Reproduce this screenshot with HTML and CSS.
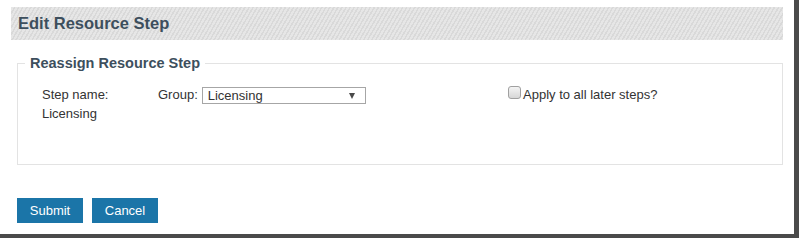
FILE: index.html
```html
<!DOCTYPE html>
<html>
<head>
<meta charset="utf-8">
<link rel="stylesheet" href="styles.css">
</head>
<body>
<div class="page">
  <div class="title-bar"><h1 class="title">Edit Resource Step</h1></div>
  <fieldset class="panel">
    <legend class="panel-legend">Reassign Resource Step</legend>
    <div class="form-row">
      <div class="step-name">Step name:<br>Licensing</div>
      <div class="group">
        <span class="group-label">Group:</span>
        <span class="select"><span class="select-text">Licensing</span><span class="select-arrow"></span></span>
      </div>
      <label class="apply"><span class="checkbox"></span>Apply to all later steps?</label>
    </div>
  </fieldset>
  <div class="actions">
    <button class="btn">Submit</button>
    <button class="btn">Cancel</button>
  </div>
</div>
</body>
</html>
```
FILE: styles.css
```css
html {
  background: #4a4a4a;
  margin: 0;
  padding: 0;
}
body {
  margin: 0;
  padding: 0;
  font-family: "Liberation Sans", Arial, sans-serif;
  font-size: 13px;
  color: #333;
}
.page {
  width: 794px;
  height: 234px;
  background: #fff;
  padding-top: 7px;
  box-sizing: border-box;
}
.title-bar {
  margin: 0 11px 0 11px;
  height: 33px;
  background: repeating-linear-gradient(-60deg, #e6e6e6 0px, #e6e6e6 2px, #d9d9d9 2px, #d9d9d9 3.5px);
  display: flex;
  align-items: center;
  padding-left: 7px;
}
.title {
  margin: 0;
  font-size: 16.5px;
  font-weight: bold;
  color: #3d4f5d;
}
.panel {
  margin: 15px 11px 0 17px;
  padding: 13px 0 0 0;
  border: 1px solid #e3e3e3;
  height: 110px;
  box-sizing: border-box;
  min-width: 0;
}
.panel-legend {
  font-size: 14.5px;
  font-weight: bold;
  color: #3d4f5d;
  padding: 0 5px;
  margin-left: 7px;
  line-height: 17px;
}
.form-row {
  display: grid;
  grid-template-columns: 116px 350px auto;
  line-height: 19px;
  margin-left: 24px;
}
.group {
  display: flex;
  align-items: flex-start;
  gap: 4px;
}
.select {
  margin-top: 2px;
  width: 164px;
  height: 17px;
  box-sizing: border-box;
  border: 1px solid #a6a6a6;
  display: flex;
  align-items: center;
  justify-content: space-between;
  padding: 0 10px 0 5px;
  line-height: 15px;
}
.select-arrow {
  width: 0;
  height: 0;
  border-left: 3.5px solid transparent;
  border-right: 3.5px solid transparent;
  border-top: 6px solid #4a4a4a;
}
.apply {
  display: flex;
  align-items: flex-start;
}
.checkbox {
  width: 11px;
  height: 11px;
  margin-top: 1px;
  margin-right: 2px;
  border: 1px solid #a0a0a0;
  border-radius: 3px;
  background: linear-gradient(#f4f4f4, #d6d6d6);
}
.actions {
  display: flex;
  gap: 9px;
  margin: 33px 0 0 17px;
}
.btn {
  width: 66px;
  height: 25px;
  border: 0;
  background: #1b75a8;
  color: #fff;
  font-family: "Liberation Sans", Arial, sans-serif;
  font-size: 13px;
  padding: 0;
}
```
